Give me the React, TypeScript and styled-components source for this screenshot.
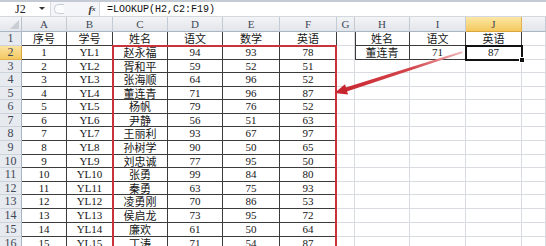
import React from "react";
import styled, { createGlobalStyle, css } from "styled-components";

const Global = createGlobalStyle`
  html, body { margin: 0; padding: 0; background: #fff; }
  body { width: 546px; height: 246px; overflow: hidden; font-family: "Liberation Serif", "Noto Sans CJK SC", serif; }
`;

const Frame = styled.div`
  position: relative;
  width: 546px;
  height: 246px;
  overflow: hidden;
  background: #fff;
  display: flex;
  flex-direction: column;
`;

const FormulaBar = styled.div`
  display: flex;
  align-items: stretch;
  height: 17px;
  box-sizing: border-box;
  border-top: 2px solid #c4cbd4;
  border-bottom: 1px solid #d3d8df;
  background: #f3f5f8;
`;

const NameBox = styled.div`
  position: relative;
  width: 51px;
  box-sizing: border-box;
  background: #fff;
  border-right: 1px solid #d5dae1;
  display: flex;
  align-items: center;
  padding-left: 15px;
  font: 12px "Liberation Serif", serif;
  color: #222;
`;

const DropArrow = styled.span`
  position: absolute;
  right: 5px;
  top: 5px;
  width: 0;
  height: 0;
  border-left: 3px solid transparent;
  border-right: 3px solid transparent;
  border-top: 3px solid #333;
`;

const Splitter = styled.div`
  width: 9px;
  margin: 2px 0 2px 3px;
  border: 1px solid #c9ced6;
  border-right: none;
  border-radius: 7px 0 0 7px;
  background: #fafbfc;
`;

const Spacer = styled.div`
  flex: 0 0 22px;
`;

const FxButton = styled.div`
  width: 12px;
  display: flex;
  align-items: center;
  justify-content: center;
  font: italic bold 11px "Liberation Serif", serif;
  color: #3a3a3a;
  & sub { font-size: 7px; vertical-align: -1px; }
`;

const FormulaInput = styled.div`
  flex: 1;
  background: #fff;
  border-left: 1px solid #d5dae1;
  margin-left: 1px;
  display: flex;
  align-items: center;
  padding-left: 7px;
  font: 10px "Liberation Mono", monospace;
  color: #111;
`;

const SheetWrap = styled.div`
  position: relative;
  flex: 1;
`;

const Sheet = styled.div`
  display: grid;
  grid-template-columns: 22px 45px 46px 55px 55px 57px 57px 18px 55px 56px 56px 1fr;
  grid-template-rows: 15px 14px 14px 13px 14px 13px 14px 13px 14px 14px 13px 14px 13px 14px 14px 14px 14px;
`;

const Corner = styled.div`
  position: relative;
  box-sizing: border-box;
  background: linear-gradient(#f4f5f7, #e3e6eb);
  border-right: 1px solid #b9c3cf;
  border-bottom: 1px solid #a9b5c4;
  &::after {
    content: "";
    position: absolute;
    right: 2px;
    bottom: 2px;
    width: 0;
    height: 0;
    border-left: 9px solid transparent;
    border-bottom: 9px solid #c9ced5;
  }
`;

const ColHead = styled.div<{ $active?: boolean }>`
  box-sizing: border-box;
  display: flex;
  align-items: center;
  justify-content: center;
  font: 11px "Liberation Serif", serif;
  color: #3e4756;
  background: ${(p) => (p.$active ? "linear-gradient(#fbe7a6, #f4c95e)" : "linear-gradient(#f3f4f6, #e2e5ea)")};
  border-right: 1px solid ${(p) => (p.$active ? "#e2b24c" : "#c3cbd6")};
  border-bottom: 1px solid ${(p) => (p.$active ? "#d9a53c" : "#a9b5c4")};
`;

const RowHead = styled.div<{ $active?: boolean }>`
  box-sizing: border-box;
  display: flex;
  align-items: center;
  justify-content: center;
  font: 12px "Liberation Serif", serif;
  color: #3e4756;
  background: ${(p) => (p.$active ? "linear-gradient(#fbe3a0, #f3c862)" : "#e7eaee")};
  border-right: 1px solid ${(p) => (p.$active ? "#d9a53c" : "#a9b5c4")};
  border-bottom: 1px solid ${(p) => (p.$active ? "#e2b24c" : "#cdd3db")};
`;

const Cell = styled.div<{ $dark?: boolean; $left?: boolean; $sel?: boolean }>`
  position: relative;
  box-sizing: border-box;
  display: flex;
  align-items: center;
  justify-content: center;
  white-space: nowrap;
  font: 11px "Liberation Serif", "Noto Sans CJK SC", serif;
  line-height: 1;
  color: #161616;
  border-right: 1px solid ${(p) => (p.$dark ? "#3b3b3b" : "#d8dbe0")};
  border-bottom: 1px solid ${(p) => (p.$dark ? "#3b3b3b" : "#d8dbe0")};
  ${(p) =>
    p.$left &&
    css`
      box-shadow: inset 1px 0 0 #3b3b3b;
    `}
  ${(p) =>
    p.$sel &&
    css`
      outline: 2px solid #111;
      outline-offset: -1px;
      z-index: 2;
      &::after {
        content: "";
        position: absolute;
        right: -4px;
        bottom: -4px;
        width: 4px;
        height: 4px;
        background: #111;
        border: 1px solid #fff;
      }
    `}
`;

const Cjk = styled.span`
  display: block;
  font-family: "Noto Sans CJK SC", sans-serif;
  font-size: 11px;
  line-height: 11px;
  height: 11px;
`;

const RedFrame = styled.div`
  position: absolute;
  left: 112px;
  top: 28px;
  width: 225px;
  height: 240px;
  box-sizing: border-box;
  border: 2px solid #c9343a;
  pointer-events: none;
`;

const ArrowLayer = styled.svg`
  position: absolute;
  left: 0;
  top: 0;
  pointer-events: none;
`;

type Row = (string | number)[];

const data: Row[] = [
  ["序号", "学号", "姓名", "语文", "数学", "英语"],
  [1, "YL1", "赵永福", 94, 93, 78],
  [2, "YL2", "胥和平", 59, 52, 51],
  [3, "YL3", "张海顺", 64, 96, 52],
  [4, "YL4", "董连青", 71, 96, 87],
  [5, "YL5", "杨帆", 79, 76, 52],
  [6, "YL6", "尹静", 56, 51, 63],
  [7, "YL7", "王丽利", 93, 67, 97],
  [8, "YL8", "孙树学", 90, 50, 65],
  [9, "YL9", "刘忠诚", 77, 95, 50],
  [10, "YL10", "张勇", 99, 84, 80],
  [11, "YL11", "秦勇", 63, 75, 93],
  [12, "YL12", "凌勇刚", 70, 86, 53],
  [13, "YL13", "侯启龙", 73, 95, 72],
  [14, "YL14", "廉欢", 61, 50, 64],
  [15, "YL15", "丁涛", 71, 54, 87],
];

const lookup: Row[] = [
  ["姓名", "语文", "英语"],
  ["董连青", 71, 87],
];

const colLetters = ["A", "B", "C", "D", "E", "F", "G", "H", "I", "J", ""];

const isCjk = (v: string | number) => typeof v === "string" && /[\u4e00-\u9fff]/.test(v);

const renderVal = (v: string | number) => (isCjk(v) ? <Cjk>{v}</Cjk> : v);

export default function App() {
  return (
    <Frame>
      <Global />
      <FormulaBar>
        <NameBox>
          J2
          <DropArrow />
        </NameBox>
        <Splitter />
        <Spacer />
        <FxButton>
          f<sub>x</sub>
        </FxButton>
        <FormulaInput>=LOOKUP(H2,C2:F19)</FormulaInput>
      </FormulaBar>
      <SheetWrap>
        <Sheet>
          <Corner />
          {colLetters.map((c, i) => (
            <ColHead key={i} $active={c === "J"}>
              {c}
            </ColHead>
          ))}
          {data.map((row, r) => (
            <React.Fragment key={r}>
              <RowHead $active={r === 1}>{r + 1}</RowHead>
              {row.map((v, c) => (
                <Cell key={c} $dark>
                  {renderVal(v)}
                </Cell>
              ))}
              <Cell />
              {r < 2
                ? lookup[r].map((v, c) => (
                    <Cell key={"l" + c} $dark $left={c === 0} $sel={r === 1 && c === 2}>
                      {renderVal(v)}
                    </Cell>
                  ))
                : [0, 1, 2].map((c) => <Cell key={"e" + c} />)}
              <Cell />
            </React.Fragment>
          ))}
        </Sheet>
        <RedFrame />
      </SheetWrap>
      <ArrowLayer width="546" height="246" viewBox="0 0 546 246">
        <defs>
          <linearGradient id="arrowGrad" x1="335" y1="93" x2="462" y2="52" gradientUnits="userSpaceOnUse">
            <stop offset="0" stopColor="#c8262e" />
            <stop offset="0.6" stopColor="#d4454c" />
            <stop offset="1" stopColor="#eeb3b6" />
          </linearGradient>
        </defs>
        <polygon points="344,88 462,51.2 462.6,53 346,91.8" fill="url(#arrowGrad)" />
        <polygon points="334.5,93 345,84.3 348,94.5" fill="#c8262e" />
      </ArrowLayer>
    </Frame>
  );
}
